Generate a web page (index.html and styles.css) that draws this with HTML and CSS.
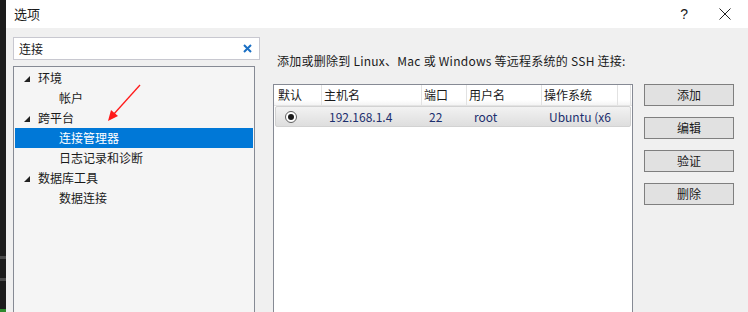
FILE: index.html
```html
<!DOCTYPE html>
<html lang="zh-CN">
<head>
<meta charset="utf-8">
<title>选项</title>
<link rel="stylesheet" href="styles.css">
</head>
<body>
<div class="strip"></div>
<div class="dialog">
  <div class="titlebar">
    <span class="title">选项</span>
    <span class="help">?</span>
    <svg class="close" width="12" height="12" viewBox="0 0 12 12"><path d="M0.5 0.5 L11.5 11.5 M11.5 0.5 L0.5 11.5" stroke="#222" stroke-width="1" fill="none"/></svg>
  </div>
  <div class="content">
    <div class="left">
      <div class="search">
        <span class="search-text">连接</span>
        <svg class="clear" width="9" height="9" viewBox="0 0 9 9"><path d="M1 1 L8 8 M8 1 L1 8" stroke="#1a6fc4" stroke-width="2" fill="none"/></svg>
      </div>
      <div class="tree">
        <div class="node lvl0"><svg class="tri" width="6" height="6" viewBox="0 0 6 6"><polygon points="6,0 6,6 0,6" fill="#222"/></svg><span>环境</span></div>
        <div class="node lvl1"><span>帐户</span></div>
        <div class="node lvl0"><svg class="tri" width="6" height="6" viewBox="0 0 6 6"><polygon points="6,0 6,6 0,6" fill="#222"/></svg><span>跨平台</span></div>
        <div class="node lvl1 selected"><span>连接管理器</span></div>
        <div class="node lvl1"><span>日志记录和诊断</span></div>
        <div class="node lvl0"><svg class="tri" width="6" height="6" viewBox="0 0 6 6"><polygon points="6,0 6,6 0,6" fill="#222"/></svg><span>数据库工具</span></div>
        <div class="node lvl1"><span>数据连接</span></div>
      </div>
    </div>
    <div class="right">
      <div class="label">添加或删除到 Linux、Mac 或 Windows 等远程系统的 SSH 连接:</div>
      <div class="main">
        <div class="list">
          <div class="header">
            <div class="hc c1">默认</div>
            <div class="hc c2">主机名</div>
            <div class="hc c3">端口</div>
            <div class="hc c4">用户名</div>
            <div class="hc c5">操作系统</div>
            <div class="hc c6"></div>
          </div>
          <div class="row">
            <div class="rc c1"><span class="radio"><span class="dot"></span></span></div>
            <div class="rc c2">192.168.1.4</div>
            <div class="rc c3">22</div>
            <div class="rc c4">root</div>
            <div class="rc c5">Ubuntu (x6</div>
          </div>
        </div>
        <div class="buttons">
          <button class="btn">添加</button>
          <button class="btn">编辑</button>
          <button class="btn">验证</button>
          <button class="btn">删除</button>
        </div>
      </div>
    </div>
    <svg class="arrow" width="40" height="44" viewBox="0 0 40 44">
      <line x1="35" y1="3" x2="8" y2="33" stroke="#ff1a1a" stroke-width="1.3"/>
      <polygon points="3,39 6,28 13,34" fill="#ff1a1a"/>
    </svg>
  </div>
</div>
</body>
</html>
```

FILE: styles.css
```css
* { box-sizing: border-box; }
html, body { margin: 0; padding: 0; }
body {
  width: 748px;
  height: 312px;
  overflow: hidden;
  display: flex;
  font-family: "Noto Sans CJK SC", "Noto Sans", sans-serif;
  font-size: 12px;
  color: #1a1a1a;
  background: #f0f0f0;
}
.strip {
  width: 6px;
  flex: none;
  background: linear-gradient(to bottom,
    #1c1c1c 0, #1c1c1c 256px, #4a4a4a 256px, #4a4a4a 259px,
    #1c1c1c 259px, #1c1c1c 278px, #4a4a4a 278px, #4a4a4a 281px,
    #1c1c1c 281px, #1c1c1c 309px, #2f8a2f 309px);
}
.dialog {
  flex: 1;
  display: flex;
  flex-direction: column;
  min-width: 0;
}
.titlebar {
  height: 28px;
  flex: none;
  background: #ffffff;
  display: flex;
  align-items: center;
  padding-left: 8px;
  font-size: 13px;
}
.title { flex: 1; line-height: 16px; }
.help { margin-right: 31px; font-family: "Liberation Sans", sans-serif; font-size: 14px; }
.close { margin-right: 17px; }
.content {
  flex: 1;
  display: flex;
  position: relative;
  background: #f0f0f0;
}
.left {
  width: 247px;
  margin-left: 7px;
  margin-top: 9px;
  display: flex;
  flex-direction: column;
  gap: 6px;
}
.search {
  height: 23px;
  background: #ffffff;
  border: 1px solid #c8c8d0;
  display: flex;
  align-items: center;
  padding-left: 5px;
  padding-right: 7px;
}
.search-text { flex: 1; line-height: 16px; }
.tree {
  width: 242px;
  flex: 1;
  background: #f5f5f5;
  border: 1px solid #868a94;
  border-bottom: none;
  padding: 1px 1px 0 1px;
}
.node {
  height: 20px;
  display: flex;
  align-items: center;
  line-height: 16px;
}
.node.lvl0 { padding-left: 9px; }
.node.lvl0 .tri { margin-right: 8px; margin-top: 1px; }
.node.lvl1 { padding-left: 44px; }
.node.selected { background: #0078d7; color: #ffffff; }
.right {
  margin-left: 13px;
  display: flex;
  flex-direction: column;
}
.label {
  margin-top: 25px;
  padding-left: 4px;
  line-height: 16px;
  height: 16px;
  margin-bottom: 15px;
  white-space: nowrap;
  letter-spacing: 0.25px;
}
.main {
  display: flex;
  flex: 1;
}
.list {
  width: 360px;
  background: #ffffff;
  border: 1px solid #868a94;
  border-bottom: none;
}
.header {
  display: flex;
  height: 21px;
  border-bottom: 1px solid #e4e4e4;
  background: linear-gradient(to bottom, #ffffff 0, #ffffff 75%, #f4f4f4 100%);
}
.hc {
  height: 20px;
  line-height: 20px;
  padding-left: 2px;
  border-right: 1px solid #e2e2e2;
  white-space: nowrap;
}
.hc.c1 { padding-left: 4px; }
.c1 { width: 48px; }
.c2 { width: 100px; }
.c3 { width: 45px; }
.c4 { width: 75px; }
.c5 { width: 76px; }
.c6 { width: 13px; }
.row {
  display: flex;
  height: 21px;
  margin: 0 1px;
  border: 1px solid #d2d2d2;
  border-radius: 2px;
  background: linear-gradient(to bottom, #f2f2f2, #dedede);
  color: #1c2f6e;
}
.rc {
  line-height: 19px;
  white-space: nowrap;
  overflow: hidden;
}
.row .c1 { width: 47px; display: flex; align-items: center; padding-left: 9px; }
.row .c2 { padding-left: 6px; }
.row .c3 { padding-left: 6px; }
.row .c4 { padding-left: 6px; }
.row .c5 { padding-left: 6px; width: 82px; }
.radio {
  width: 12px;
  height: 12px;
  border-radius: 50%;
  border: 1px solid #5e5e5e;
  background: #ffffff;
  display: flex;
  align-items: center;
  justify-content: center;
}
.dot {
  width: 6px;
  height: 6px;
  border-radius: 50%;
  background: #1a1a1a;
}
.buttons {
  margin-left: 11px;
  display: flex;
  flex-direction: column;
  gap: 11px;
}
.btn {
  width: 90px;
  height: 22px;
  padding: 0;
  background: #e1e1e1;
  border: 1px solid #7f7f7f;
  font-family: inherit;
  font-size: 12px;
  line-height: 16px;
  color: #1a1a1a;
}
.arrow {
  position: absolute;
  left: 99px;
  top: 54px;
}
```
